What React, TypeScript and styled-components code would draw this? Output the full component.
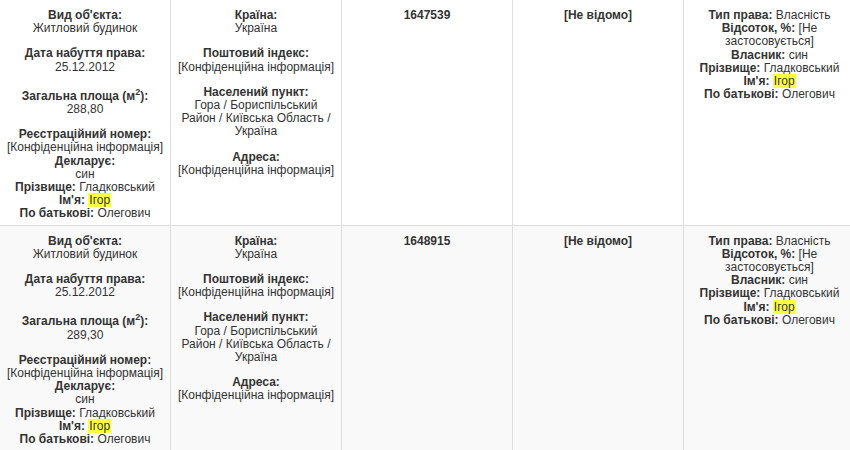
import React from "react";
import styled, { createGlobalStyle } from "styled-components";

const Global = createGlobalStyle`
  html, body { margin: 0; padding: 0; background: #fff; }
  body { overflow: hidden; font-family: "Liberation Sans", Arial, sans-serif; }
`;

const Page = styled.div`
  width: 850px;
  height: 450px;
  overflow: hidden;
`;

const Table = styled.table`
  margin: -1px 0 0 -1px;
  width: 856px;
  table-layout: fixed;
  border-collapse: collapse;
  font-family: "Liberation Sans", Arial, sans-serif;
  font-size: 12px;
  color: #333;
`;

const Row = styled.tr<{ $shaded?: boolean }>`
  background: ${(p) => (p.$shaded ? "#f9f9f9" : "#fff")};
`;

const Cell = styled.td`
  border: 1px solid #ddd;
  padding: 9px 5px 4px;
  vertical-align: top;
  text-align: center;
  line-height: 13.2px;
`;

const Group = styled.div`
  & + & {
    margin-top: 12px;
  }
`;

const Label = styled.b`
  font-weight: bold;
`;

const Sup = styled.sup`
  font-size: 9px;
  vertical-align: super;
`;

const Mark = styled.mark`
  background: #ffff40;
  color: #333;
  padding: 0 1px;
`;

const Line = styled.div``;

type Rec = { id: string; area: string };

const records: Rec[] = [
  { id: "1647539", area: "288,80" },
  { id: "1648915", area: "289,30" },
];

const Person = () => (
  <>
    <Line>
      <Label>Прізвище:</Label> Гладковський
    </Line>
    <Line>
      <Label>Ім'я:</Label> <Mark>Ігор</Mark>
    </Line>
    <Line>
      <Label>По батькові:</Label> Олегович
    </Line>
  </>
);

export default function App() {
  return (
    <Page>
      <Global />
      <Table>
        <colgroup>
          <col style={{ width: 171 }} />
          <col style={{ width: 171 }} />
          <col style={{ width: 171 }} />
          <col style={{ width: 171 }} />
          <col style={{ width: 172 }} />
        </colgroup>
        <tbody>
          {records.map((r, i) => (
            <Row key={r.id} $shaded={i % 2 === 1}>
              <Cell>
                <Group>
                  <Line><Label>Вид об'єкта:</Label></Line>
                  <Line>Житловий будинок</Line>
                </Group>
                <Group>
                  <Line><Label>Дата набуття права:</Label></Line>
                  <Line>25.12.2012</Line>
                </Group>
                <Group>
                  <Line>
                    <Label>
                      Загальна площа (м<Sup>2</Sup>):
                    </Label>
                  </Line>
                  <Line>{r.area}</Line>
                </Group>
                <Group>
                  <Line><Label>Реєстраційний номер:</Label></Line>
                  <Line>[Конфіденційна інформація]</Line>
                  <Line><Label>Декларує:</Label></Line>
                  <Line>син</Line>
                  <Person />
                </Group>
              </Cell>
              <Cell>
                <Group>
                  <Line><Label>Країна:</Label></Line>
                  <Line>Україна</Line>
                </Group>
                <Group>
                  <Line><Label>Поштовий індекс:</Label></Line>
                  <Line>[Конфіденційна інформація]</Line>
                </Group>
                <Group>
                  <Line><Label>Населений пункт:</Label></Line>
                  <Line>Гора / Бориспільський Район / Київська Область / Україна</Line>
                </Group>
                <Group>
                  <Line><Label>Адреса:</Label></Line>
                  <Line>[Конфіденційна інформація]</Line>
                </Group>
              </Cell>
              <Cell>
                <Label>{r.id}</Label>
              </Cell>
              <Cell>
                <Label>[Не відомо]</Label>
              </Cell>
              <Cell>
                <Line>
                  <Label>Тип права:</Label> Власність
                </Line>
                <Line>
                  <Label>Відсоток, %:</Label> [Не застосовується]
                </Line>
                <Line>
                  <Label>Власник:</Label> син
                </Line>
                <Person />
              </Cell>
            </Row>
          ))}
        </tbody>
      </Table>
    </Page>
  );
}
